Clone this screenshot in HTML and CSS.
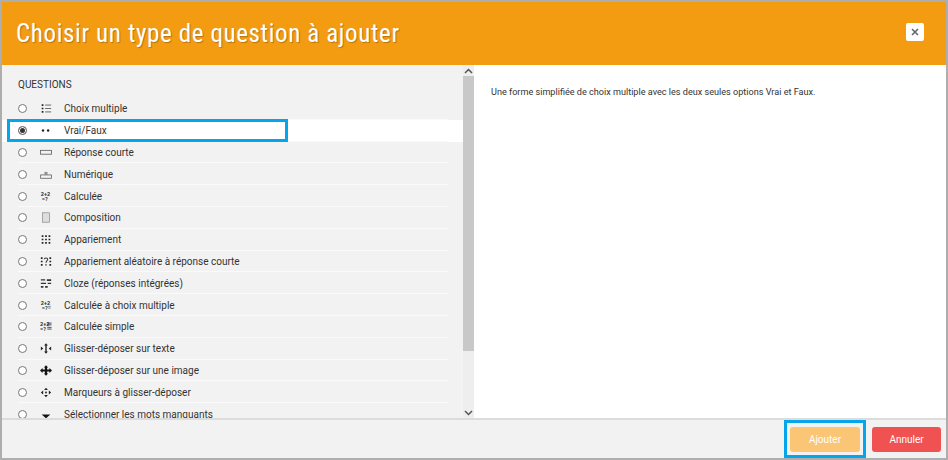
FILE: index.html
```html
<!DOCTYPE html>
<html lang="fr">
<head>
<meta charset="utf-8">
<title>Choisir un type de question à ajouter</title>
<link rel="stylesheet" href="styles.css">
</head>
<body>
<div class="dialog">
  <header class="head">
    <h1 class="title">Choisir un type de question à ajouter</h1>
    <button class="close" aria-label="Fermer">
      <svg width="8" height="8" viewBox="0 0 8 8"><path d="M1 1L7 7M7 1L1 7" stroke="#5f6770" stroke-width="1.6"/></svg>
    </button>
  </header>
  <main class="body">
    <section class="list">
      <div class="group">QUESTIONS</div>
      <div class="rows">
        <label class="row"><span class="radio"></span>
          <svg class="ico" viewBox="0 0 14 12"><path d="M2 1h2v2H2zM2 5h2v2H2zM2 9h2v2H2z" fill="#222"/><path d="M6 2h7M6 6h7M6 10h7" stroke="#555" stroke-width="1"/></svg>
          <span class="name">Choix multiple</span></label>
        <label class="row sel"><span class="radio on"></span>
          <svg class="ico" viewBox="0 0 14 12"><circle cx="3.5" cy="6" r="1.4" fill="#222"/><circle cx="9.5" cy="6" r="1.4" fill="#222"/></svg>
          <span class="name">Vrai/Faux</span><span class="hl hl-row"></span></label>
        <label class="row"><span class="radio"></span>
          <svg class="ico" viewBox="0 0 14 12"><rect x="0.5" y="3.5" width="13" height="4.5" fill="none" stroke="#666"/></svg>
          <span class="name">Réponse courte</span></label>
        <label class="row"><span class="radio"></span>
          <svg class="ico" viewBox="0 0 14 12"><path d="M.5 6.500h13V10.500H.5z" fill="none" stroke="#666"/><path d="M6 3v3M8 3v3" stroke="#444"/></svg>
          <span class="name">Numérique</span></label>
        <label class="row"><span class="radio"></span>
          <svg class="ico" viewBox="0 0 14 12"><text class="ico-t" x="1" y="5">2+2</text><text class="ico-t" x="2" y="11.500">=?</text></svg>
          <span class="name">Calculée</span></label>
        <label class="row"><span class="radio"></span>
          <svg class="ico" viewBox="0 0 14 12"><rect x="3" y="0.500" width="8" height="11" fill="#ddd" stroke="#888" stroke-width=".8"/></svg>
          <span class="name">Composition</span></label>
        <label class="row"><span class="radio"></span>
          <svg class="ico" viewBox="0 0 14 12"><path d="M2 1h2v2H2zM2 5h2v2H2zM2 9h2v2H2zM10 1h2v2h-2zM10 5h2v2h-2zM10 9h2v2h-2zM6 1h2v2H6zM6 5h2v2H6zM6 9h2v2H6z" fill="#222"/></svg>
          <span class="name">Appariement</span></label>
        <label class="row"><span class="radio"></span>
          <svg class="ico" viewBox="0 0 14 12"><path d="M1 1h2v2H1zM1 5h2v2H1zM1 9h2v2H1zM11 1h2v2h-2zM11 5h2v2h-2zM11 9h2v2h-2z" fill="#222"/><path d="M5 3.500C5 1.500 9 1.500 9 3.500C9 5 7 5 7 7.500M7 9v2" fill="none" stroke="#333" stroke-width="1.200"/></svg>
          <span class="name">Appariement aléatoire à réponse courte</span></label>
        <label class="row"><span class="radio"></span>
          <svg class="ico" viewBox="0 0 14 12"><path d="M1 1h5v1.500H1zM8 1h5v2H8zM1 5h6v1.500H1zM9 5h4v1.500H9zM1 9h3v2H1zM6 9h3v2H6z" fill="#333"/></svg>
          <span class="name">Cloze (réponses intégrées)</span></label>
        <label class="row"><span class="radio"></span>
          <svg class="ico" viewBox="0 0 14 12"><text class="ico-t" x="1" y="5">2+2</text><text class="ico-t" x="2" y="11.500">=?</text><path d="M9.500 7h3M9.500 9h3" stroke="#555" stroke-width=".8"/></svg>
          <span class="name">Calculée à choix multiple</span></label>
        <label class="row"><span class="radio"></span>
          <svg class="ico" viewBox="0 0 14 12"><text class="ico-t" x="0" y="5">2+2</text><text class="ico-t" x="0" y="11.500">=?</text><path d="M8.500 2h5M8.500 4h5M8.500 7h5M8.500 9h5" stroke="#333" stroke-width="1"/></svg>
          <span class="name">Calculée simple</span></label>
        <label class="row"><span class="radio"></span>
          <svg class="ico" viewBox="0 0 14 12"><path d="M7 0l2.200 2.500H7.800V9.500h1.400L7 12 4.800 9.500h1.400V2.500H4.800z" fill="#222"/><path d="M3.800 6L1 3.800v4.400zM10.200 6L13 3.800v4.400z" fill="#222"/></svg>
          <span class="name">Glisser-déposer sur texte</span></label>
        <label class="row"><span class="radio"></span>
          <svg class="ico" viewBox="0 0 14 12"><path d="M7 0l2.500 2.500H8.300V4.700H11V3l3 3-3 3V7.300H8.300V9.500H9.500L7 12 4.500 9.500H5.700V7.300H3V9L0 6l3-3v1.700H5.700V2.500H4.500z" fill="#111"/></svg>
          <span class="name">Glisser-déposer sur une image</span></label>
        <label class="row"><span class="radio"></span>
          <svg class="ico" viewBox="0 0 14 12"><path d="M7 .5l2.200 2.700H4.800zM7 11.500L4.800 8.800h4.400zM1 6l2.700-2.200v4.400zM13 6l-2.700-2.200v4.400z" fill="#222"/><rect x="6" y="5" width="2" height="2" fill="#222"/></svg>
          <span class="name">Marqueurs à glisser-déposer</span></label>
        <label class="row"><span class="radio"></span>
          <svg class="ico" viewBox="0 0 14 12"><path d="M2 6h10l-5 4.500z" fill="#111"/></svg>
          <span class="name">Sélectionner les mots manquants</span></label>
      </div>
    </section>
    <div class="scrollbar">
      <svg class="arrow" width="9" height="6" viewBox="0 0 9 6"><path d="M1 5L4.500 1.500 8 5" fill="none" stroke="#555" stroke-width="1.500"/></svg>
      <div class="track"><div class="thumb"></div></div>
      <svg class="arrow" width="9" height="6" viewBox="0 0 9 6"><path d="M1 1L4.500 4.500 8 1" fill="none" stroke="#555" stroke-width="1.500"/></svg>
    </div>
    <section class="desc">Une forme simplifiée de choix multiple avec les deux seules options Vrai et Faux.</section>
  </main>
  <footer class="foot">
    <span class="hl-wrap"><button class="btn add">Ajouter</button><span class="hl hl-btn"></span></span>
    <button class="btn cancel">Annuler</button>
  </footer>
</div>
</body>
</html>
```
FILE: styles.css
```css
* { box-sizing: border-box; }
html, body { margin: 0; padding: 0; }
body { width: 948px; height: 460px; overflow: hidden; font-family: Roboto, "Liberation Sans", sans-serif; }
.dialog {
  width: 948px; height: 460px;
  border: 2px solid #aeaeae;
  display: flex; flex-direction: column;
  background: #f2f2f2;
}
.head {
  height: 63px; flex: none;
  background: #f39c12;
  display: flex; align-items: center; justify-content: space-between;
  padding: 0 22px 0 14px;
}
.title {
  margin: 0;
  font-size: 25px; font-weight: 400; font-stretch: 75%; letter-spacing: 0.63px;
  color: #fff;
  text-shadow: 1px 1px 1px rgba(0,0,0,.25);
}
.close {
  width: 18px; height: 18px; padding: 0; border: 0; border-radius: 2px;
  background: #fff; margin-bottom: 3px;
  display: flex; align-items: center; justify-content: center;
}
.body { flex: none; display: flex; border-bottom: 2px solid #dcdcdc; height: 355px; }
.list { width: 461px; flex: none; overflow: hidden; background: #f2f2f2; }
.group { font-size: 10px; color: #333; padding: 14px 0 0 16px; height: 33px; line-height: 12px; }
.rows { display: flex; flex-direction: column; }
.row {
  height: 21.8px; flex: none;
  position: relative;
  display: flex; align-items: center;
  padding-left: 16px;
  font-size: 10px; color: #333;
}
.row::after {
  content: ""; position: absolute; left: 16px; right: 15px; bottom: 0;
  border-bottom: 1px solid #fafafa;
}
.row.sel { background: #fff; }
.radio {
  width: 9px; height: 9px; border-radius: 50%;
  border: 1px solid #777; background: #fff; flex: none;
  margin-right: 13px;
}
.radio.on { background: #333; box-shadow: inset 0 0 0 1px #fff; }
.ico { width: 12px; height: 11px; flex: none; margin-right: 12px; }
.ico-t { font-size: 6.5px; font-weight: 700; fill: #333; font-family: Roboto, sans-serif; }
.hl { position: absolute; border: 3px solid #04a5ea; pointer-events: none; }
.hl-row { left: 5px; top: -1px; width: 281px; height: 23px; z-index: 2; }
.scrollbar {
  width: 11px; flex: none; background: #eeeeee;
  display: flex; flex-direction: column; align-items: center;
}
.arrow { flex: none; margin: 3px 0 2px; }
.track { flex: 1; width: 100%; }
.thumb { height: 275px; background: #c8c8c8; }
.desc {
  flex: 1; background: #fff;
  padding: 21px 17px; font-size: 9.1px; line-height: 12px; color: #333;
}
.foot {
  flex: 1;
  display: flex; align-items: center; justify-content: flex-end;
  gap: 12px; padding: 0 5px 0 0;
}
.hl-wrap { position: relative; display: flex; }
.btn {
  width: 70px; height: 25px; border: 0; border-radius: 3px;
  font-family: inherit; font-size: 10px; color: #fff; padding: 0;
}
.add { background: #fac675; }
.cancel { background: #f05252; width: 69px; }
.hl-btn { left: -6px; top: -7px; width: 82px; height: 38px; }
```
